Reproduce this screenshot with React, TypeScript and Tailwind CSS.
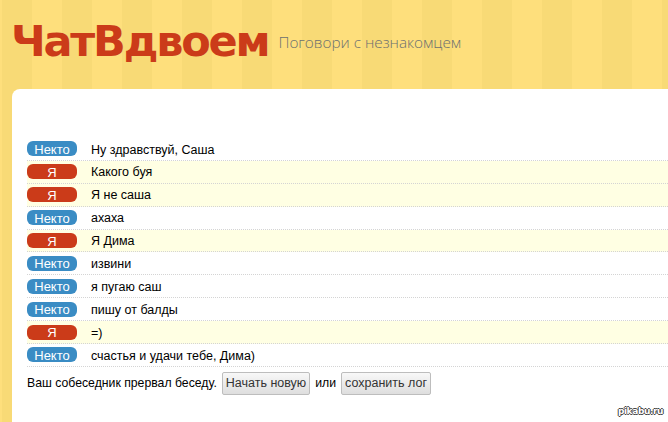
const messages: { me: boolean; text: string }[] = [
  { me: false, text: 'Ну здравствуй, Саша' },
  { me: true, text: 'Какого буя' },
  { me: true, text: 'Я не саша' },
  { me: false, text: 'ахаха' },
  { me: true, text: 'Я Дима' },
  { me: false, text: 'извини' },
  { me: false, text: 'я пугаю саш' },
  { me: false, text: 'пишу от балды' },
  { me: true, text: '=)' },
  { me: false, text: 'счастья и удачи тебе, Дима)' },
];

function Row({ me, text }: { me: boolean; text: string }) {
  return (
    <div
      className={
        'flex h-[22.9px] items-center border-b border-dotted border-[#d4d4d4] ' +
        (me ? 'bg-[#ffffe3]' : 'bg-white')
      }
    >
      <span
        className={
          'flex h-[15px] w-[50px] shrink-0 items-center justify-center rounded-[6px] pt-[1px] text-[13px] leading-none text-white ' +
          (me ? 'bg-[#cb3b19]' : 'bg-[#3a8cc4]')
        }
      >
        {me ? 'Я' : 'Некто'}
      </span>
      <span className="mt-[2px] ml-[14px] text-[12.5px] text-black">{text}</span>
    </div>
  );
}

function LogButton({ children }: { children: string }) {
  return (
    <button className="h-[23px] rounded-[2px] border border-[#bdbdbd] bg-gradient-to-b from-[#f8f8f8] to-[#dedede] px-[3px] text-[12.5px] text-[#333]">
      {children}
    </button>
  );
}

export default function App() {
  return (
    <div className="relative flex h-[422px] w-[668px] flex-col overflow-hidden bg-[repeating-linear-gradient(to_right,#fedf7c_0px,#fedf7c_2px,#f8da76_2px,#f8da76_32px,#fedf7c_32px,#fedf7c_60px)] font-['Liberation_Sans',sans-serif]">
      <header className="flex h-[89px] shrink-0 items-start pl-[11px]">
        <h1 className="mt-[13px] font-['DejaVu_Sans',sans-serif] text-[43px] leading-[56px] font-bold tracking-[-2.2px] text-[#cb3b19]">
          ЧатВдвоем
        </h1>
        <p className="mt-[32px] ml-[10px] font-['Open_Sans',sans-serif] text-[15.3px] leading-[20px] font-light text-[#6b6f70]">
          Поговори с незнакомцем
        </p>
      </header>
      <main className="ml-[12px] flex-1 rounded-tl-[8px] bg-white pt-[49px] pl-[15px]">
        {messages.map((m, i) => (
          <Row key={i} me={m.me} text={m.text} />
        ))}
        <div className="mt-[5px] flex items-center gap-[5px] text-[12.25px] text-black">
          <span>Ваш собеседник прервал беседу.</span>
          <LogButton>Начать новую</LogButton>
          <span>или</span>
          <LogButton>сохранить лог</LogButton>
        </div>
      </main>
      <span className="absolute right-[5px] bottom-[4px] font-['DejaVu_Sans',sans-serif] text-[9px] font-bold tracking-[-0.4px] text-white [text-shadow:1px_0_#444,-1px_0_#444,0_1px_#444,0_-1px_#444]">
        pikabu.ru
      </span>
    </div>
  );
}
